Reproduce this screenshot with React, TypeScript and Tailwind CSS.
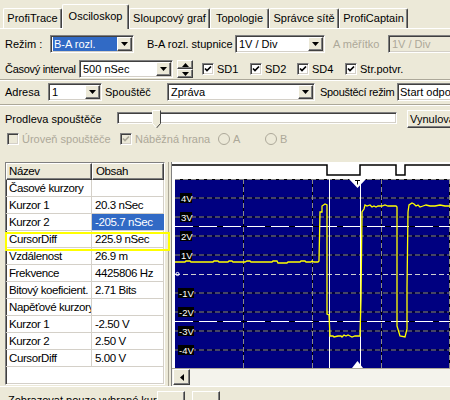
import React from "react";

const sunken =
  "border border-[#808080] border-b-white border-r-white shadow-[inset_1px_1px_0_#404040,inset_-1px_-1px_0_#d4d0c8]";
const raised =
  "border border-white border-b-[#404040] border-r-[#404040] shadow-[inset_-1px_-1px_0_#808080]";

function Arrow({ color = "#000", dir = "down" }: { color?: string; dir?: "down" | "up" | "left" }) {
  if (dir === "left")
    return (
      <svg width="4" height="7" viewBox="0 0 4 7">
        <path d="M4 0v7L0 3.5z" fill={color} />
      </svg>
    );
  return (
    <svg width="7" height="4" viewBox="0 0 7 4">
      <path d={dir === "down" ? "M0 0h7L3.5 4z" : "M0 4h7L3.5 0z"} fill={color} />
    </svg>
  );
}

function Combo({
  className,
  text,
  selected,
  disabled,
}: {
  className: string;
  text: string;
  selected?: boolean;
  disabled?: boolean;
}) {
  return (
    <div
      className={`flex h-[18px] shrink-0 items-center ${sunken} ${
        disabled ? "bg-[#ECE9D8] text-[#ACA899]" : "bg-white text-black"
      } ${className}`}
    >
      <div className="flex h-full min-w-0 flex-1 items-center overflow-hidden pl-[2px]">
        <span
          className={`flex h-[14px] items-center whitespace-nowrap px-[1px] ${
            selected ? "flex-1 bg-[#316AC5] text-white" : ""
          }`}
        >
          {text}
        </span>
      </div>
      {!disabled && (
        <div className={`mr-[1px] flex h-[14px] w-[15px] shrink-0 items-center justify-center bg-[#ECE9D8] ${raised}`}>
          <Arrow />
        </div>
      )}
    </div>
  );
}

function Check({ checked, disabled }: { checked?: boolean; disabled?: boolean }) {
  return (
    <div
      className={`flex h-[12px] w-[12px] shrink-0 items-center justify-center ${sunken} ${
        disabled ? "bg-[#ECE9D8]" : "bg-white"
      }`}
    >
      {checked && (
        <svg width="8" height="8" viewBox="0 0 8 8">
          <path d="M1 3.5 3 5.5 7 1.5" fill="none" stroke={disabled ? "#ACA899" : "#000"} strokeWidth="1.7" />
        </svg>
      )}
    </div>
  );
}

function Radio() {
  return (
    <svg width="12" height="12" viewBox="0 0 12 12" className="shrink-0">
      <circle cx="6" cy="6" r="5.5" fill="#ECE9D8" stroke="#ACA899" />
    </svg>
  );
}

const tabs = [
  { t: "ProfiTrace", w: "w-[59px]" },
  { t: "Osciloskop", w: "w-[67px]", active: true },
  { t: "Sloupcový graf", w: "w-[81px]" },
  { t: "Topologie", w: "w-[59px]" },
  { t: "Správce sítě", w: "w-[70px]" },
  { t: "ProfiCaptain", w: "w-[69px]" },
];

const rows: [string, string, boolean?][] = [
  ["Časové kurzory", ""],
  ["Kurzor 1", "20.3 nSec"],
  ["Kurzor 2", "-205.7 nSec", true],
  ["CursorDiff", "225.9 nSec"],
  ["Vzdálenost", "26.9 m"],
  ["Frekvence", "4425806 Hz"],
  ["Bitový koeficient.", "2.71 Bits"],
  ["Napěťové kurzory", ""],
  ["Kurzor 1", "-2.50 V"],
  ["Kurzor 2", "2.50 V"],
  ["CursorDiff", "5.00 V"],
];

const hLines = [180.5, 199, 218, 237, 256, 294, 313, 332, 351];
const vLines = [243.5, 312.5, 381.5, 449.5];
const labels: [string, number][] = [
  ["4V", 199],
  ["3V", 218],
  ["2V", 237],
  ["1V", 256],
  ["-1V", 294],
  ["-2V", 313],
  ["-3V", 332],
  ["-4V", 351],
];

const trace =
  "175,263 185,263 186,262 190,262 191,263 213,263 214,262 218,262 219,263 228,263 229,262 232,262 233,263 245,263 247,262 250,262 251,263 272,263 273,262 277,262 278,264 287,264 288,263 300,263 301,262 305,262 306,263 311,263 312,262 314,263 318,263 319,262 320,213 322,213 322,207 325,205 327,206 327,315 329,316 330,337 333,337 334,338 338,337 341,337 342,338 344,336 346,337 348,336 350,337 352,338 355,337 360,337 361,300 362,213 364,210 365,206 367,207 370,206 372,208 374,207 376,208 378,207 382,207 385,206 388,207 392,207 396,207 397,208 397,327 400,337 405,338 407,330 407,289 408,213 409,206 412,204 414,205 416,207 418,206 420,208 423,207 426,206 430,207 435,207 440,206 445,207 450,207";

function Scope() {
  return (
    <svg width="278" height="206" viewBox="172 163 278 206" className="block">
      <rect x="172" y="163" width="278" height="206" fill="#fff" />
      <polyline
        points="172,166 327,166 327,176 360,176 360,166 396,166 396,176 405,176 405,166 450,166"
        fill="none"
        stroke="#000"
        strokeWidth="1.5"
      />
      <rect x="175" y="180" width="275" height="189" fill="#000080" />
      {hLines.map((y) => (
        <g key={y}>
          <line x1="175" x2="450" y1={y} y2={y} stroke="#000" />
          <line x1="175" x2="450" y1={y} y2={y} stroke="#8a8a8a" strokeDasharray="5 3" />
        </g>
      ))}
      <line x1="175" x2="450" y1="275.5" y2="275.5" stroke="#d0d0d0" strokeDasharray="5 3" />
      {vLines.map((x) => (
        <g key={x}>
          <line x1={x} x2={x} y1="180" y2="369" stroke="#000" />
          <line x1={x} x2={x} y1="180" y2="369" stroke="#8a8a8a" strokeDasharray="5 3" />
        </g>
      ))}
      {[227.5, 322.5].map((y) => (
        <g key={y}>
          <line x1="175" x2="450" y1={y} y2={y} stroke="#000" />
          <line x1="175" x2="450" y1={y} y2={y} stroke="#fff" strokeDasharray="18 6" />
        </g>
      ))}
      <line x1="329.5" x2="329.5" y1="180" y2="369" stroke="#fff" />
      <line x1="360.5" x2="360.5" y1="180" y2="369" stroke="#fff" />
      <polyline points={trace} fill="none" stroke="#ffff00" strokeWidth="1.3" />
      {labels.map(([t, y]) => {
        const neg = t.startsWith("-");
        return (
          <g key={t}>
            <rect x={neg ? 178 : 180} y={y - 5} width={neg ? 16 : 12} height="10" fill="#000" />
            <text
              x={neg ? 179 : 181}
              y={y + 3.5}
              fill="#fff"
              fontSize="9.5"
              fontFamily="Liberation Sans, Arial, sans-serif"
            >
              {t}
            </text>
          </g>
        );
      })}
      <circle cx="177.5" cy="275" r="1.6" fill="none" stroke="#fff" />
      <polygon points="349,180 366,180 357.5,189" fill="#fff" />
      <path d="M355 181.5h5M357.5 181.5v4" stroke="#000" strokeWidth="1" />
      <polygon points="352,369 363,369 357.5,362" fill="#fff" />
    </svg>
  );
}

export default function App() {
  return (
    <div className="h-[400px] w-[450px] overflow-hidden bg-[#ECE9D8] pt-[4px] font-['Liberation_Sans',Arial,sans-serif] text-[11px] leading-[13px] text-black">
      {/* tabs */}
      <div className="flex h-[24px] items-end pl-[3px]">
        {tabs.map((tab) => (
          <div
            key={tab.t}
            className={`${tab.w} shrink-0 whitespace-nowrap rounded-t-[2px] border-l border-t border-white border-r-[#404040] border-r text-center shadow-[inset_-1px_0_0_#808080] ${
              tab.active ? "relative z-10 -mb-px h-[25px] bg-[#ECE9D8] pt-[5px]" : "h-[20px] pt-[3px]"
            }`}
          >
            {tab.t}
          </div>
        ))}
      </div>

      <div className="border-t border-white">
        {/* row 1 */}
        <div className="mt-[6px] flex h-[18px] items-center whitespace-nowrap pl-[5px]">
          <span className="w-[45px] shrink-0">Režim :</span>
          <Combo className="w-[84px]" text="B-A rozl." selected />
          <span className="ml-[13px] w-[88px] shrink-0">B-A rozl. stupnice</span>
          <Combo className="w-[90px]" text="1V / Div" />
          <span className="ml-[8px] w-[55px] shrink-0 text-[#ACA899]">A měřítko</span>
          <Combo className="w-[90px]" text="1V / Div" disabled />
        </div>

        {/* row 2 */}
        <div className="mt-[7px] flex h-[18px] items-center whitespace-nowrap pl-[5px]">
          <span className="w-[74px] shrink-0 tracking-[-0.3px]">Časový interval</span>
          <Combo className="w-[94px]" text="500 nSec" />
          <div className="ml-[4px] flex h-[18px] w-[16px] shrink-0 flex-col">
            <div className={`flex flex-1 items-center justify-center ${raised}`}>
              <Arrow dir="up" />
            </div>
            <div className={`flex flex-1 items-center justify-center ${raised}`}>
              <Arrow />
            </div>
          </div>
          <div className="ml-[9px] flex w-[48px] shrink-0 items-center gap-[3px]">
            <Check checked />
            <span>SD1</span>
          </div>
          <div className="flex w-[47px] shrink-0 items-center gap-[3px]">
            <Check checked />
            <span>SD2</span>
          </div>
          <div className="flex w-[48px] shrink-0 items-center gap-[3px]">
            <Check checked />
            <span>SD4</span>
          </div>
          <div className="flex shrink-0 items-center gap-[3px]">
            <Check checked />
            <span>Str.potvr.</span>
          </div>
        </div>

        <div className="mt-[1px] h-[2px] border-t border-b border-[#ACA899] border-b-white" />

        {/* row 3 */}
        <div className="mt-[2px] flex h-[18px] items-center whitespace-nowrap pl-[5px]">
          <span className="w-[43px] shrink-0">Adresa</span>
          <Combo className="w-[54px]" text="1" />
          <span className="ml-[3px] w-[62px] shrink-0">Spouštěč</span>
          <Combo className="w-[148px]" text="Zpráva" />
          <span className="ml-[5px] w-[77px] shrink-0 tracking-[-0.3px]">Spouštěcí režim</span>
          <div className={`flex h-[18px] w-[70px] shrink-0 items-center bg-white pl-[2px] ${sunken}`}>Start odpovědi</div>
        </div>

        <div className="mt-[3px] h-[2px] border-t border-b border-[#ACA899] border-b-white" />

        {/* row 4 */}
        <div className="mt-[3px] flex h-[20px] items-center whitespace-nowrap pl-[5px]">
          <span className="w-[112px] shrink-0">Prodleva spouštěče</span>
          <div className="relative h-[20px] w-[280px] shrink-0">
            <div className={`absolute left-0 right-0 top-[3px] h-[12px] bg-white ${sunken}`} />
            <svg width="9" height="19" viewBox="0 0 9 19" className="absolute left-[35px] top-[1px]">
              <path d="M0.5 0.5H8.5V13.5L4.5 18L0.5 13.5Z" fill="#ECE9D8" />
              <path d="M0.5 13.5V0.5H8" fill="none" stroke="#fff" />
              <path d="M8.5 0.5V13.5L4.5 18" fill="none" stroke="#404040" />
              <path d="M0.5 13.5L4 17.5" fill="none" stroke="#fff" />
            </svg>
          </div>
          <div className={`ml-[10px] flex h-[18px] w-[54px] shrink-0 items-center justify-center bg-[#ECE9D8] ${raised}`}>
            Vynulovat
          </div>
        </div>

        {/* row 5 */}
        <div className="mt-[2px] flex h-[16px] items-center whitespace-nowrap pl-[7px] text-[#ACA899]">
          <div className="flex w-[113px] shrink-0 items-center gap-[3px]">
            <Check disabled />
            <span>Úroveň spouštěče</span>
          </div>
          <div className="flex w-[98px] shrink-0 items-center gap-[3px]">
            <Check checked disabled />
            <span>Náběžná hrana</span>
          </div>
          <div className="flex w-[47px] shrink-0 items-center gap-[3px]">
            <Radio />
            <span>A</span>
          </div>
          <div className="flex shrink-0 items-center gap-[3px]">
            <Radio />
            <span>B</span>
          </div>
        </div>

        {/* main */}
        <div className="relative mt-[15px] flex h-[224px]">
          <div
            className={`ml-[5px] h-[223px] w-[160px] shrink-0 overflow-hidden bg-white text-[11.5px] tracking-[-0.4px] ${sunken}`}
          >
            <div className="flex h-[17px] bg-[#ECE9D8]">
              <div className={`flex w-[86px] items-center pl-[2px] ${raised}`}>Název</div>
              <div className={`flex w-[72px] items-center pl-[3px] ${raised}`}>Obsah</div>
            </div>
            {rows.map(([a, b, sel], i) => (
              <div key={i} className="flex h-[17px] border-b border-[#D4D0C8]">
                <div className="flex w-[86px] items-center overflow-hidden whitespace-nowrap border-r border-[#D4D0C8] pl-[3px]">
                  {a}
                </div>
                <div
                  className={`flex flex-1 items-center whitespace-nowrap pl-[3px] ${sel ? "bg-[#316AC5] text-white" : ""}`}
                >
                  {b}
                </div>
              </div>
            ))}
          </div>

          <div className="pointer-events-none absolute left-[5px] top-[70px] h-[19px] w-[165px] border-2 border-[#FFFF00]" />

          <div className="ml-[3px] flex flex-1 border-l border-[#ACA899] pl-[2px]">
            <div className="flex flex-1 flex-col border-l border-[#808080]">
              <Scope />
              <div className="flex h-[18px] border-t border-[#ACA899] bg-[#F4F3EC]">
                <div className={`ml-[1px] flex h-[16px] w-[17px] items-center justify-center bg-[#ECE9D8] ${raised}`}>
                  <Arrow dir="left" />
                </div>
              </div>
            </div>
          </div>
        </div>

        {/* status */}
        <div className="flex h-[20px] items-start whitespace-nowrap border-t border-white pt-[4px]">
          <div className="w-[157px] shrink-0 overflow-hidden pl-[8px] pt-[3px]">Zobrazovat pouze vybrané kurzory</div>
          <div className={`h-[14px] w-[28px] shrink-0 ${raised}`} />
          <div className={`ml-[7px] h-[14px] w-[28px] shrink-0 ${raised}`} />
        </div>
      </div>
    </div>
  );
}
